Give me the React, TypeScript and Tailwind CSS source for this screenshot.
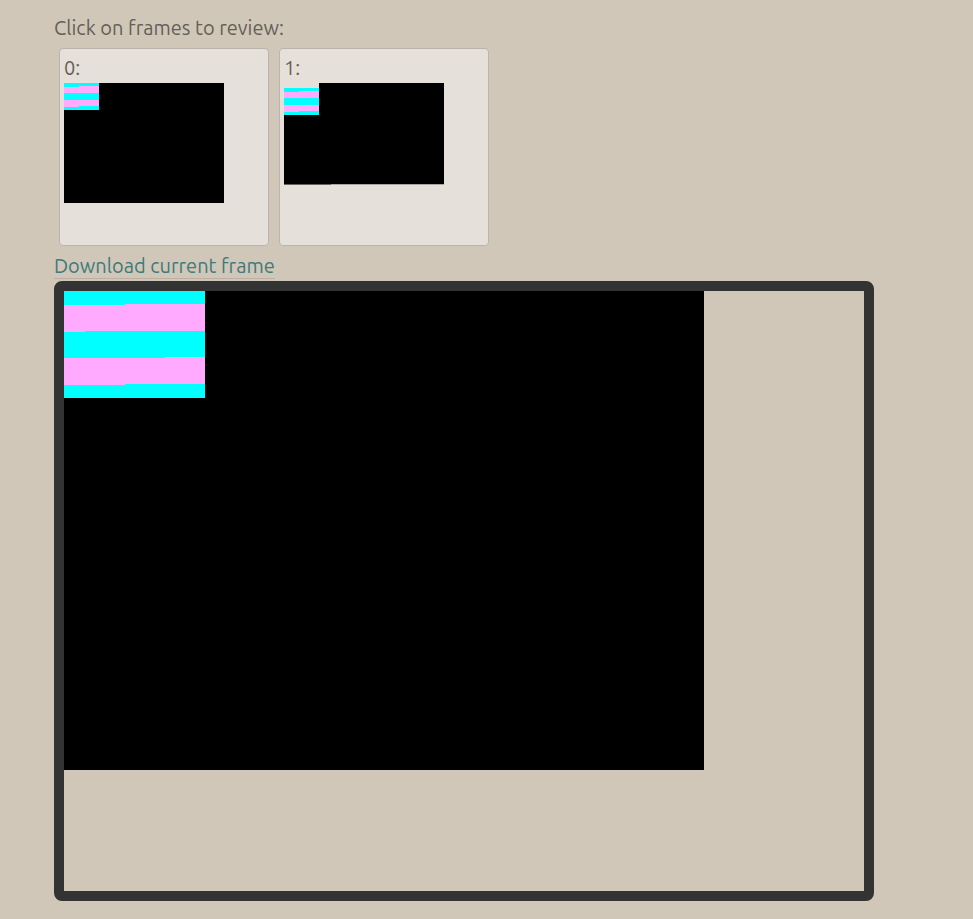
import { useState } from "react";

function Stripes() {
  return (
    <>
      <rect width="141" height="107" fill="#00ffff" />
      <path d="M0 14H61V13H141V40H21V41H0Z" fill="#ffaaff" />
      <path d="M0 67H101V66H141V93H61V94H0Z" fill="#ffaaff" />
    </>
  );
}

function FirstFrame() {
  return (
    <>
      <rect width="640" height="479" fill="#000" />
      <Stripes />
    </>
  );
}

function SecondFrame() {
  return (
    <>
      <path d="M141 0H640V404H0V20H141Z" fill="#000" />
      <rect y="404" width="188" height="4" fill="#66635f" />
      <rect x="188" y="404" width="452" height="4" fill="#a9a6a1" />
      <g transform="translate(0 20)">
        <Stripes />
      </g>
    </>
  );
}

const frames = [FirstFrame, SecondFrame];

export default function App() {
  const [current, setCurrent] = useState(0);
  const Current = frames[current];

  return (
    <main className="min-h-screen bg-[#d0c7b8] px-[54px] pt-3 pb-[18px] font-['Ubuntu','Noto_Sans',sans-serif] text-[20px] leading-8 text-[#655f57]">
      <p>Click on frames to review:</p>
      <div className="flex flex-wrap gap-[10px] px-[5px] py-1">
        {frames.map((Frame, index) => (
          <button
            key={index}
            type="button"
            aria-pressed={current === index}
            onClick={() => setCurrent(index)}
            className="flex h-[198px] w-[210px] flex-col items-start rounded-[4px] border border-[#bbb4ac] bg-[#e5e0da] px-1 pt-1 text-left leading-[30px]"
          >
            <span>{index}:</span>
            <svg
              className="h-[150px] w-[200px]"
              viewBox="0 0 800 600"
              shapeRendering="crispEdges"
              aria-hidden="true"
            >
              <Frame />
            </svg>
          </button>
        ))}
      </div>
      <div className="flex h-[31px] items-start pt-1">
        <a href="#frame" className="border-b border-[#bbb0a6] leading-6 text-[#407a7a]">
          Download current frame
        </a>
      </div>
      <div
        id="frame"
        className="w-full max-w-[820px] rounded-lg border-[10px] border-[#333]"
      >
        <svg
          className="block w-full"
          viewBox="0 0 800 600"
          shapeRendering="crispEdges"
          role="img"
          aria-label="Current frame"
        >
          <Current />
        </svg>
      </div>
    </main>
  );
}
